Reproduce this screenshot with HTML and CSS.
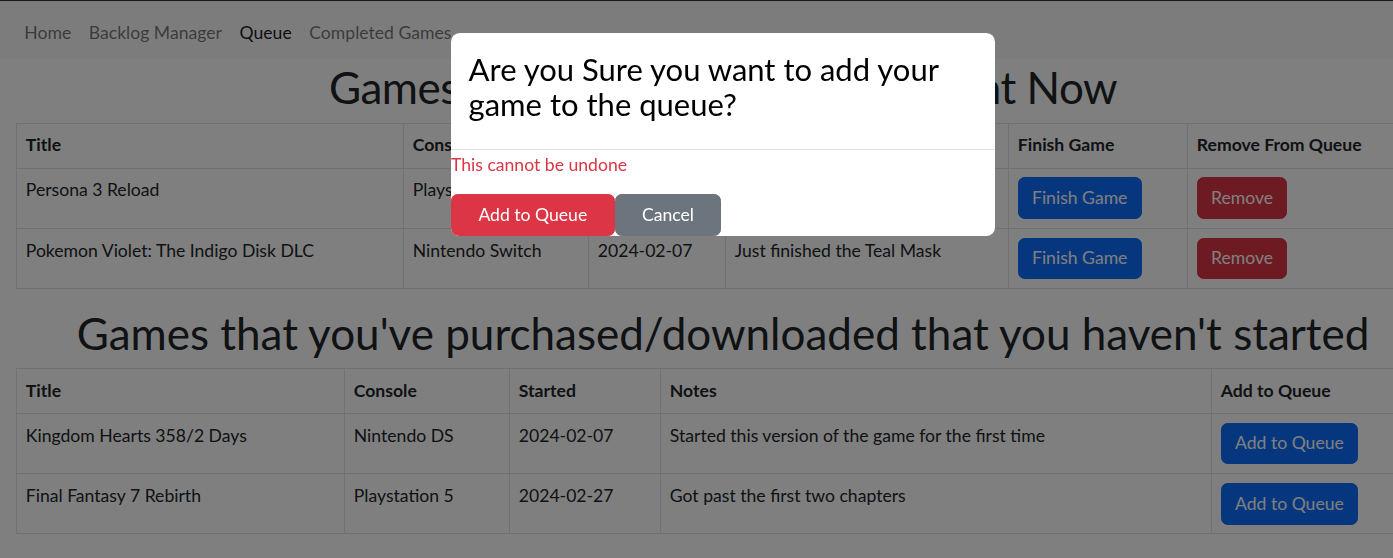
FILE: index.html
```html
<!DOCTYPE html>
<html lang="en">
<head>
<meta charset="utf-8">
<title>Queue</title>
<link rel="stylesheet" href="styles.css">
</head>
<body>
<div class="page">
  <nav class="navbar">
    <a class="nav-link" href="#">Home</a>
    <a class="nav-link" href="#">Backlog Manager</a>
    <a class="nav-link active" href="#">Queue</a>
    <a class="nav-link" href="#">Completed Games</a>
  </nav>
  <main class="content">
    <h1 class="heading heading-tight">Games you're currently playing Right Now</h1>
    <table class="table">
      <colgroup>
        <col class="c1a"><col class="c1b"><col class="c1c"><col class="c1d"><col class="c1e"><col>
      </colgroup>
      <thead>
        <tr>
          <th>Title</th>
          <th>Console</th>
          <th>Started</th>
          <th>Notes</th>
          <th>Finish Game</th>
          <th>Remove From Queue</th>
        </tr>
      </thead>
      <tbody>
        <tr>
          <td>Persona 3 Reload</td>
          <td>Playstation 5</td>
          <td>2024-02-02</td>
          <td>Made it to the second month</td>
          <td><button class="btn btn-primary">Finish Game</button></td>
          <td><button class="btn btn-danger">Remove</button></td>
        </tr>
        <tr>
          <td>Pokemon Violet: The Indigo Disk DLC</td>
          <td>Nintendo Switch</td>
          <td>2024-02-07</td>
          <td>Just finished the Teal Mask</td>
          <td><button class="btn btn-primary">Finish Game</button></td>
          <td><button class="btn btn-danger">Remove</button></td>
        </tr>
      </tbody>
    </table>

    <h1 class="heading">Games that you've purchased/downloaded that you haven't started</h1>
    <table class="table">
      <colgroup>
        <col class="c2a"><col class="c2b"><col class="c2c"><col class="c2d"><col>
      </colgroup>
      <thead>
        <tr>
          <th>Title</th>
          <th>Console</th>
          <th>Started</th>
          <th>Notes</th>
          <th>Add to Queue</th>
        </tr>
      </thead>
      <tbody>
        <tr>
          <td>Kingdom Hearts 358/2 Days</td>
          <td>Nintendo DS</td>
          <td>2024-02-07</td>
          <td>Started this version of the game for the first time</td>
          <td><button class="btn btn-primary">Add to Queue</button></td>
        </tr>
        <tr>
          <td>Final Fantasy 7 Rebirth</td>
          <td>Playstation 5</td>
          <td>2024-02-27</td>
          <td>Got past the first two chapters</td>
          <td><button class="btn btn-primary">Add to Queue</button></td>
        </tr>
      </tbody>
    </table>
  </main>
</div>

<div class="backdrop"></div>
<div class="modal-layer">
  <div class="modal" role="dialog">
    <div class="modal-header">
      <h3 class="modal-title">Are you Sure you want to add your game to the queue?</h3>
    </div>
    <p class="modal-text">This cannot be undone</p>
    <div class="modal-actions">
      <button class="mbtn mbtn-danger">Add to Queue</button>
      <button class="mbtn mbtn-secondary">Cancel</button>
    </div>
  </div>
</div>
</body>
</html>
```

FILE: styles.css
```css
html {
  overflow: hidden;
  border-top: 1px solid #333;
}
body {
  margin: 0;
  font-family: Lato, "Open Sans", "Liberation Sans", sans-serif;
  font-size: 17.6px;
  line-height: 1.5;
  color: #212529;
  background: #fff;
}
.page {
  width: 1446px;
}
.navbar {
  display: flex;
  align-items: flex-start;
  box-sizing: border-box;
  height: 57px;
  padding: 19px 15.5px 0;
  background: #f8f9fa;
}
.nav-link {
  padding: 0 8.8px;
  color: rgba(0, 0, 0, 0.55);
  text-decoration: none;
  line-height: 26.4px;
}
.nav-link.active {
  color: rgba(0, 0, 0, 0.9);
}
.content {
  padding: 0 16px;
}
.heading {
  margin: 3px 0 8.8px;
  font-size: 44px;
  font-weight: 400;
  line-height: 1.2;
  text-align: center;
}
.heading-tight {
  letter-spacing: -0.5px;
}
.table {
  width: 100%;
  table-layout: fixed;
  border-collapse: collapse;
  margin-bottom: 17.6px;
}
.table th,
.table td {
  border: 1px solid #dee2e6;
  padding: 8.8px;
  text-align: left;
  vertical-align: top;
  white-space: nowrap;
}
.table th {
  font-weight: 700;
}
.c1a { width: 387px; }
.c1b { width: 185px; }
.c1c { width: 137px; }
.c1d { width: 283px; }
.c1e { width: 179px; }
.c2a { width: 328px; }
.c2b { width: 165px; }
.c2c { width: 151px; }
.c2d { width: 551px; }

.btn {
  font: inherit;
  padding: 6.6px 13.2px;
  border: 1px solid transparent;
  border-radius: 6.6px;
  color: #fff;
  cursor: pointer;
}
.btn-primary {
  background: #0d6efd;
  border-color: #0d6efd;
}
.btn-danger {
  background: #dc3545;
  border-color: #dc3545;
}

.backdrop {
  position: fixed;
  inset: 0;
  background: rgba(0, 0, 0, 0.5);
}
.modal-layer {
  position: fixed;
  top: 33px;
  left: 0;
  width: 1446px;
  display: flex;
  justify-content: center;
}
.modal {
  width: 544px;
  box-sizing: border-box;
  background: #fff;
  border-radius: 8.8px;
  overflow: hidden;
}
.modal-header {
  padding: 19px 17.6px 27px;
  border-bottom: 1px solid #dee2e6;
}
.modal-title {
  margin: 0;
  font-size: 31px;
  font-weight: 400;
  line-height: 35px;
  color: #000;
}
.modal-text {
  margin: 0 0 15.6px;
  padding-top: 2px;
  color: #dc3545;
}
.modal-actions {
  display: flex;
}
.mbtn {
  font: inherit;
  color: #fff;
  padding: 6.6px 26.4px;
  border: 1px solid transparent;
  border-radius: 6.6px;
  cursor: pointer;
}
.mbtn-danger {
  background: #dc3545;
  border-color: #dc3545;
}
.mbtn-secondary {
  background: #6c757d;
  border-color: #6c757d;
}
```
